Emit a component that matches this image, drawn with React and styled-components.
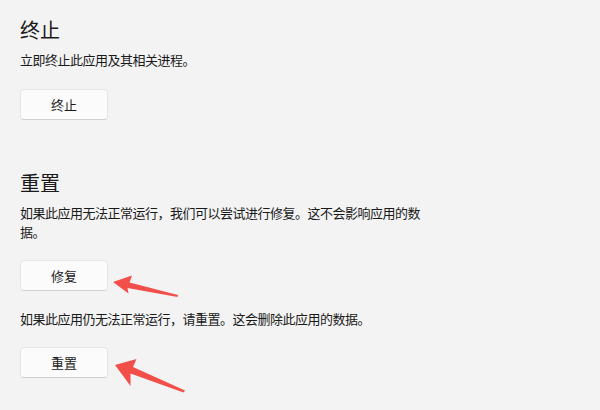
import React from "react";
import styled, { createGlobalStyle } from "styled-components";

const Global = createGlobalStyle`
  html, body {
    margin: 0;
    padding: 0;
    background: #f3f3f3;
  }
  body {
    font-family: "Noto Sans CJK SC", "Noto Sans", sans-serif;
    color: #1a1a1a;
  }
`;

const Page = styled.div`
  position: relative;
  width: 600px;
  height: 410px;
  overflow: hidden;
  background: #f3f3f3;
  box-sizing: border-box;
  padding: 16px 0 0 20px;
  display: flex;
  flex-direction: column;
  gap: 49px;
`;

const Section = styled.section`
  display: flex;
  flex-direction: column;
  align-items: flex-start;
`;

const Title = styled.h2`
  margin: 0 0 6px;
  font-size: 20px;
  line-height: 28px;
  font-weight: 400;
  color: #1a1a1a;
`;

const Desc = styled.p`
  margin: 0 0 ${(p) => p.$after}px;
  max-width: 406px;
  font-size: 13px;
  letter-spacing: -0.5px;
  line-height: 19.5px;
  color: #1a1a1a;
`;

const Button = styled.button`
  width: 88px;
  height: 31px;
  box-sizing: border-box;
  margin: 0 0 ${(p) => p.$after || 0}px;
  padding: 0;
  background: #fbfbfb;
  border: 1px solid #e6e6e6;
  border-bottom-color: #cfcfcf;
  border-radius: 4px;
  font-family: inherit;
  font-size: 13px;
  line-height: 29px;
  color: #1b1b1b;
`;

const Overlay = styled.svg`
  position: absolute;
  left: 0;
  top: 0;
  pointer-events: none;
`;

export default function App() {
  return (
    <Page>
      <Global />
      <Section>
        <Title>终止</Title>
        <Desc $after={19}>立即终止此应用及其相关进程。</Desc>
        <Button>终止</Button>
      </Section>
      <Section>
        <Title>重置</Title>
        <Desc $after={18}>
          如果此应用无法正常运行，我们可以尝试进行修复。这不会影响应用的数据。
        </Desc>
        <Button $after={18}>修复</Button>
        <Desc $after={19}>如果此应用仍无法正常运行，请重置。这会删除此应用的数据。</Desc>
        <Button>重置</Button>
      </Section>
      <Overlay width="600" height="410" viewBox="0 0 600 410">
        <polygon
          fill="#f24f4b"
          points="113,282 132,275.5 129.5,282.5 178,295 177.5,297 127.5,288 128.5,293.5"
        />
        <polygon
          fill="#f24f4b"
          points="115,365 136.5,359 133,367 185,390.5 183.5,392.5 130.5,373.5 130.5,386"
        />
      </Overlay>
    </Page>
  );
}
